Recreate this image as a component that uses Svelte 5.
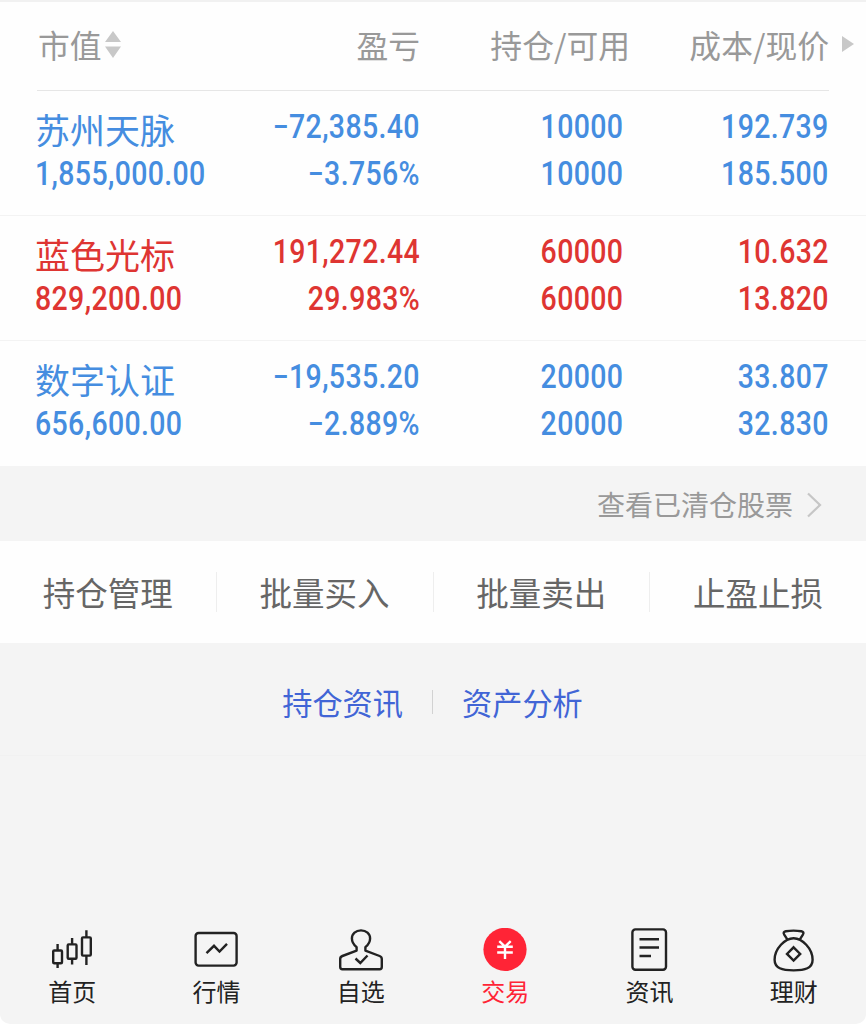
<script>
  const holdings = [
    {
      name: '苏州天脉',
      value: '1,855,000.00',
      profit: '−72,385.40',
      rate: '−3.756%',
      held: '10000',
      available: '10000',
      cost: '192.739',
      price: '185.500'
    },
    {
      name: '蓝色光标',
      value: '829,200.00',
      profit: '191,272.44',
      rate: '29.983%',
      held: '60000',
      available: '60000',
      cost: '10.632',
      price: '13.820'
    },
    {
      name: '数字认证',
      value: '656,600.00',
      profit: '−19,535.20',
      rate: '−2.889%',
      held: '20000',
      available: '20000',
      cost: '33.807',
      price: '32.830'
    }
  ];

  const actions = ['持仓管理', '批量买入', '批量卖出', '止盈止损'];

  const tabs = [
    { id: 'home', label: '首页' },
    { id: 'market', label: '行情' },
    { id: 'watch', label: '自选' },
    { id: 'trade', label: '交易' },
    { id: 'news', label: '资讯' },
    { id: 'wealth', label: '理财' }
  ];

  let activeTab = $state('trade');
</script>

<div class="screen">
  <section class="positions">
    <header class="columns head">
      <div class="sortable">
        市值
        <svg class="sort" width="16" height="27" viewBox="0 0 16 27">
          <path d="M8 0L16 11H0zM0 15.5H16L8 27z" fill="#c8c8c8" />
        </svg>
      </div>
      <div>盈亏</div>
      <div class="amount">持仓/可用</div>
      <div>成本/现价</div>
      <svg class="more" width="12" height="16" viewBox="0 0 12 16">
        <path d="M0 0L12 8L0 16z" fill="#c8c8c8" />
      </svg>
    </header>
    <div class="rule"></div>

    {#each holdings as h}
      <div class="columns row" class:gain={!h.profit.startsWith('−')}>
        <div class="cell">
          <span class="name">{h.name}</span>
          <span class="num">{h.value}</span>
        </div>
        <div class="cell">
          <span class="num">{h.profit}</span>
          <span class="num">{h.rate}</span>
        </div>
        <div class="cell">
          <span class="num">{h.held}</span>
          <span class="num">{h.available}</span>
        </div>
        <div class="cell">
          <span class="num">{h.cost}</span>
          <span class="num">{h.price}</span>
        </div>
      </div>
    {/each}
  </section>

  <div class="cleared">
    <span>查看已清仓股票</span>
    <svg width="16" height="26" viewBox="0 0 16 26">
      <path d="M2 1.5L14 13L2 24.5" fill="none" stroke="#c6c6c6" stroke-width="2.2" />
    </svg>
  </div>

  <div class="actions">
    {#each actions as action}
      <button>{action}</button>
    {/each}
  </div>

  <div class="links">
    <span>持仓资讯</span>
    <i></i>
    <span>资产分析</span>
  </div>

  <nav>
    {#each tabs as tab}
      <button class="tab" class:active={activeTab === tab.id} onclick={() => (activeTab = tab.id)}>
        <svg width="46" height="46" viewBox="0 0 46 46" fill="none" stroke="#222" stroke-width="2.4">
          {#if tab.id === 'home'}
            <rect x="4.2" y="22.5" width="8.8" height="12.8" rx="1" />
            <rect x="18.7" y="16.4" width="8.8" height="14.4" rx="1" />
            <rect x="33" y="9.4" width="8.8" height="18.2" rx="1" />
            <path d="M8.6 16v6M8.6 35v5M23.1 10v6M23.1 31v5.5M37.4 2.2v7M37.4 28v9" />
          {:else if tab.id === 'market'}
            <rect x="2.6" y="5" width="41" height="32.6" rx="3" />
            <path d="M13.5 25.2L21 17.8L26.5 23.6L34 15.8" />
          {:else if tab.id === 'watch'}
            <path
              d="M18.6 19.2C15.5 16.5 13.9 13.8 13.9 10.5C13.9 5.6 17.8 2.4 23 2.4S32.1 5.6 32.1 10.5C32.1 13.8 30.5 16.5 27.4 19.2V22.6L41.6 28Q43.8 28.8 43.8 31V39Q43.8 41.2 41.6 41.2H4.4Q2.2 41.2 2.2 39V31Q2.2 28.8 4.4 28L18.6 22.6z"
              stroke-linejoin="round"
            />
            <path d="M17.5 30.5L22.3 35L29.5 27.5" />
          {:else if tab.id === 'trade'}
            <circle cx="23" cy="21.4" r="21.6" fill="#ff2436" stroke="none" />
            <path d="M17.3 13.2L23 18.6L28.7 13.2M15.2 18.8H30.8M15.2 24.5H30.8M23 18.2V31" stroke="#fff" />
          {:else if tab.id === 'news'}
            <rect x="6.4" y="1.4" width="33.6" height="40.4" rx="3" />
            <path d="M13.5 11.2H33M13.5 19.5H33M13.5 28H25" />
          {:else}
            <path
              d="M16.3 11.3L13.2 6.6C12 4.7 12.8 3.7 14.8 3.3Q22.5 2 30.3 3.3C32.3 3.7 33.1 4.7 31.9 6.6L28.9 11.3"
            />
            <path
              d="M22.6 10.2C31 10.2 41.6 20.5 41.6 31.8C41.6 40.3 34 42.4 22.6 42.4S3.6 40.3 3.6 31.8C3.6 20.5 14.2 10.2 22.6 10.2z"
            />
            <path d="M22.6 19.3L29.2 25.9L22.6 32.5L16 25.9z" />
          {/if}
        </svg>
        <span>{tab.label}</span>
      </button>
    {/each}
  </nav>
</div>

<style>
  :global(body) {
    margin: 0;
    background: #fff;
  }

  .screen {
    display: flex;
    flex-direction: column;
    width: 866px;
    height: 1024px;
    overflow: hidden;
    background: #f4f4f4;
    border-radius: 0 0 10px 10px;
    font-family: 'Noto Sans CJK SC', sans-serif;
  }

  button {
    padding: 0;
    border: 0;
    background: none;
    font: inherit;
    color: inherit;
  }

  .positions {
    background: #fefefe;
  }

  .columns {
    display: grid;
    grid-template-columns: 170px 215px 203px 206px;
    padding-left: 35px;
  }

  .columns > div + div {
    text-align: right;
  }

  .head {
    position: relative;
    box-sizing: border-box;
    height: 90px;
    padding-top: 19px;
    border-top: 2px solid #f1f1f1;
    font-size: 31.8px;
    line-height: 47px;
    color: #999;
  }

  .sortable {
    display: flex;
    align-items: center;
    height: 47px;
    padding-left: 3px;
  }

  .sort {
    margin-left: 3px;
  }

  .head .amount {
    margin-right: -7px;
  }

  .more {
    position: absolute;
    right: 12px;
    top: 34px;
  }

  .rule {
    height: 1px;
    margin: 0 37px;
    background: #e6e6e6;
  }

  .row {
    box-sizing: border-box;
    height: 125px;
    padding-top: 13px;
    border-bottom: 1px solid #f3f3f3;
    color: #458de0;
  }

  .row:last-child {
    border-bottom: 0;
  }

  .gain {
    color: #de3532;
  }

  .cell {
    display: flex;
    flex-direction: column;
    align-items: flex-end;
  }

  .cell:first-child {
    align-items: flex-start;
  }

  .name {
    height: 47px;
    font-size: 35px;
    line-height: 49px;
    white-space: nowrap;
  }

  /* condensed figures */
  .num {
    font-family: Roboto, sans-serif;
    font-size: 32.5px;
    font-weight: 500;
    line-height: 47px;
    letter-spacing: 0.4px;
    white-space: nowrap;
    transform: scaleX(0.877);
    transform-origin: right;
  }

  .cell:first-child .num {
    transform-origin: left;
  }

  .cleared {
    display: flex;
    align-items: center;
    justify-content: flex-end;
    gap: 13px;
    height: 75px;
    padding-right: 44px;
    font-size: 28px;
    color: #999;
  }

  .cleared svg {
    margin-top: 3px;
  }

  .actions {
    display: flex;
    align-items: center;
    height: 102px;
    background: #fefefe;
    font-size: 32.5px;
    color: #666;
  }

  .actions button {
    flex: 1;
    height: 40px;
    line-height: 40px;
  }

  .actions button:not(:last-child) {
    border-right: 1px solid #eee;
  }

  .links {
    display: flex;
    align-items: center;
    justify-content: center;
    gap: 29px;
    box-sizing: border-box;
    height: 113px;
    padding: 5px 1px 0 0;
    border-bottom: 1px solid #f1f1f1;
    font-size: 30.2px;
    color: #4165d6;
  }

  .links i {
    width: 1px;
    height: 24px;
    background: #d2d2d2;
  }

  nav {
    display: flex;
    margin-top: auto;
    height: 96px;
  }

  .tab {
    display: flex;
    flex: 1;
    flex-direction: column;
    align-items: center;
    font-size: 24px;
    line-height: 34px;
    color: #222;
  }

  .active {
    color: #ff2436;
  }
</style>
